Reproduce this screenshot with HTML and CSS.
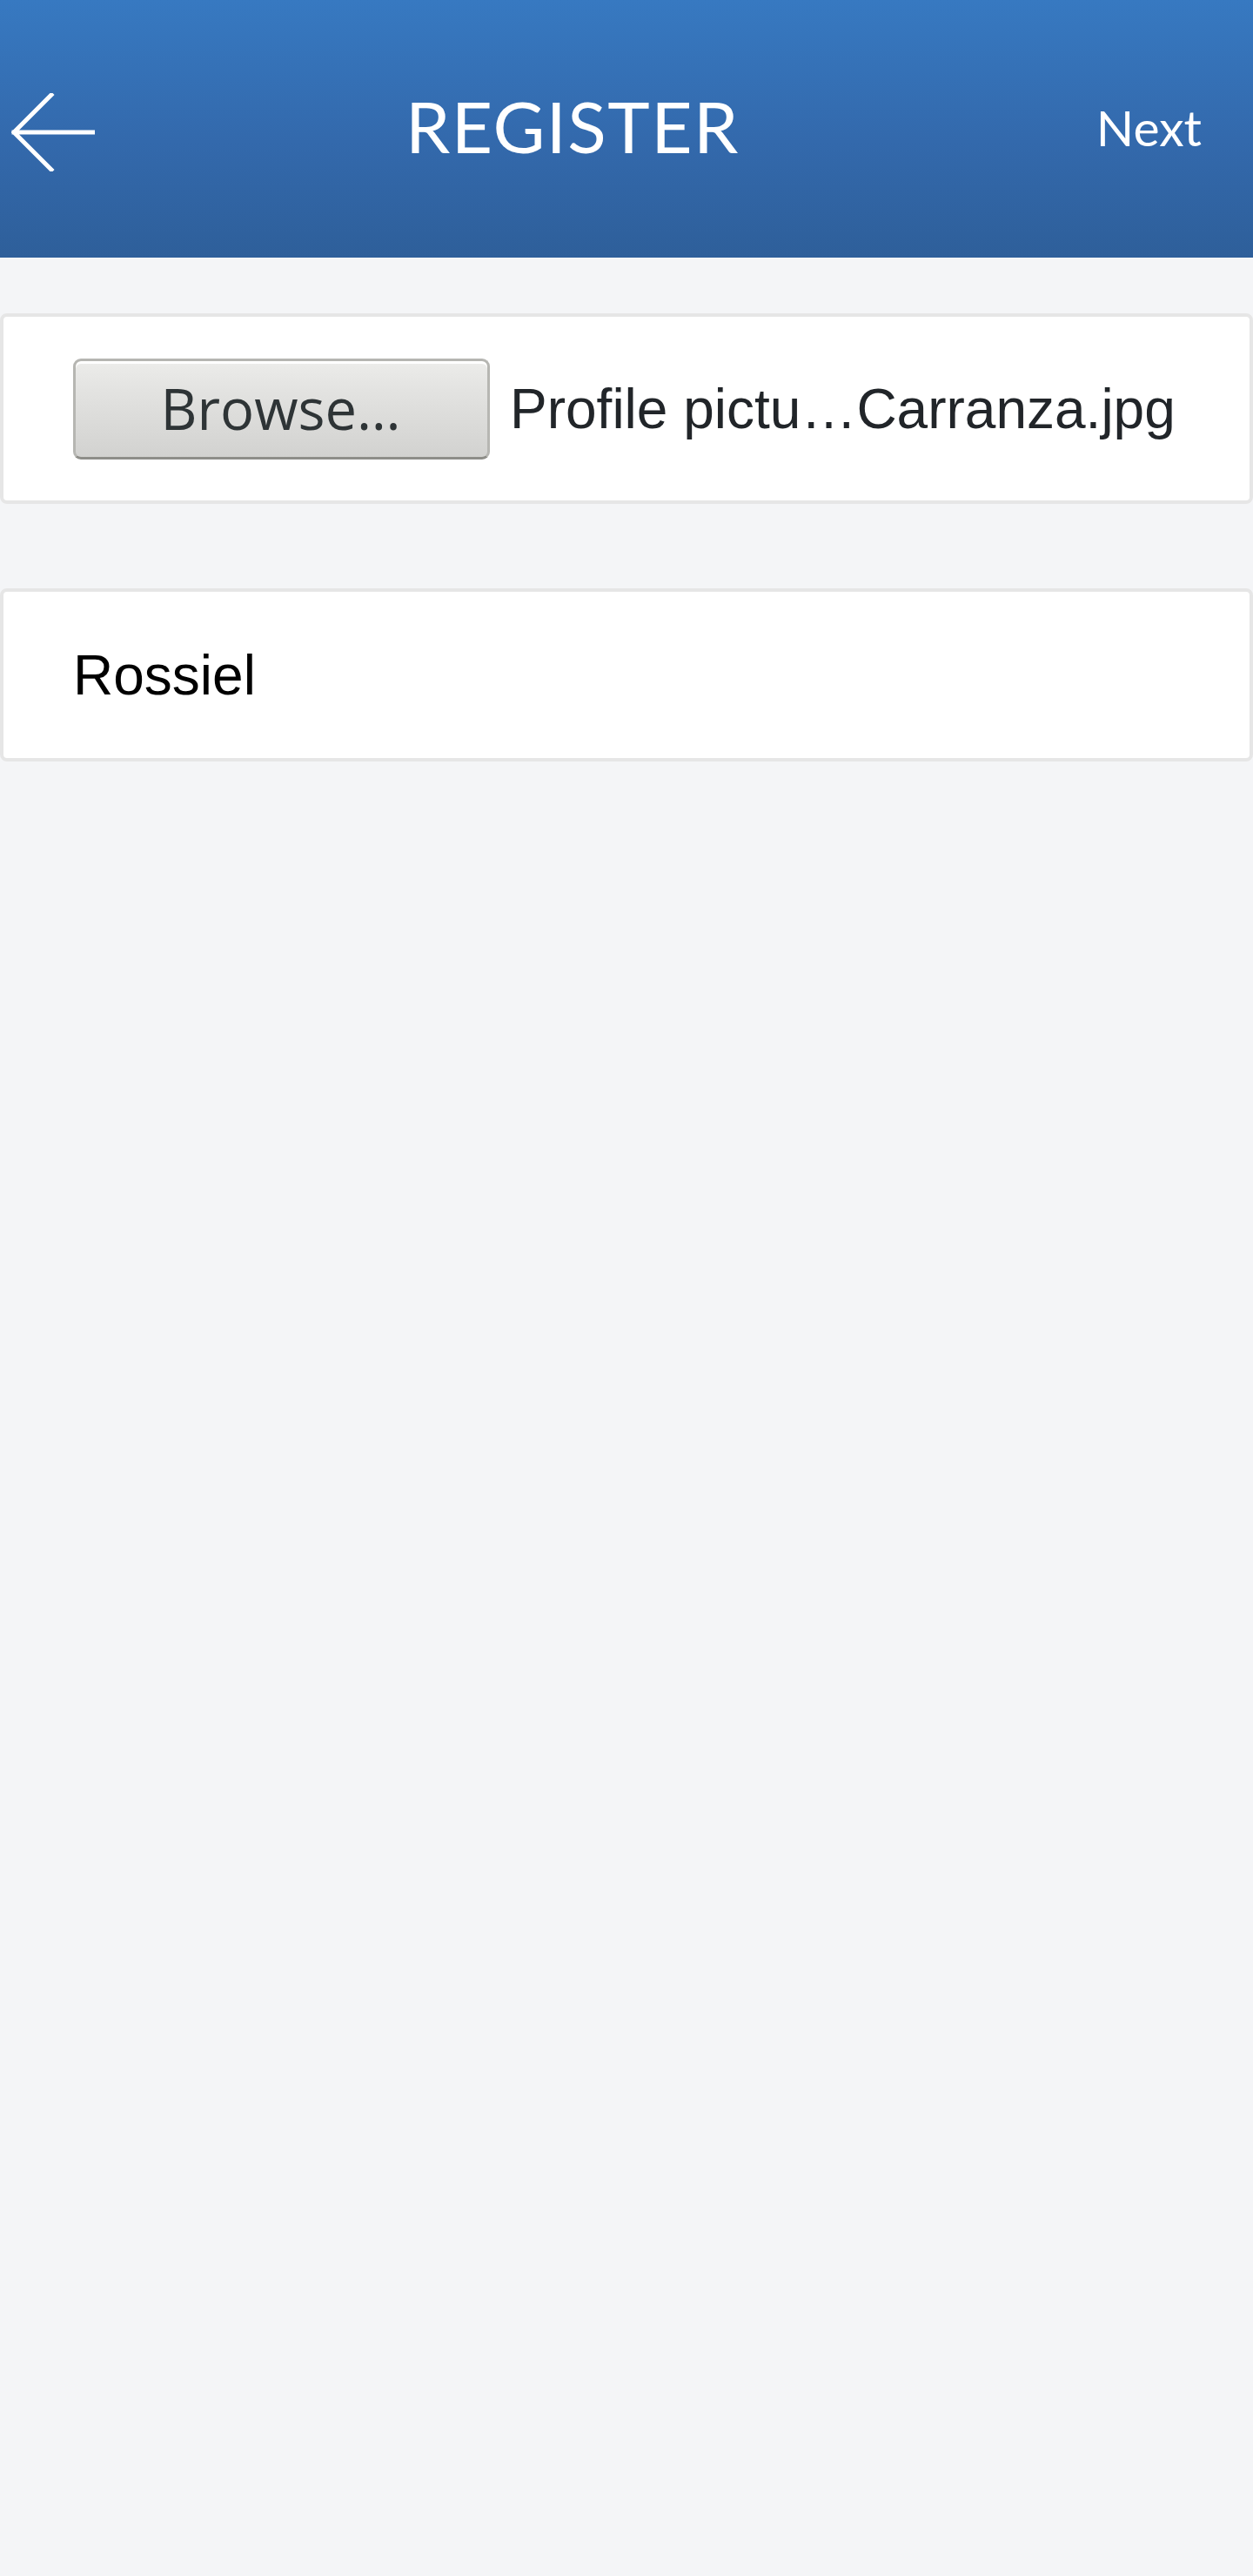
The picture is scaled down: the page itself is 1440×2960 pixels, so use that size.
FILE: index.html
```html
<!DOCTYPE html>
<html lang="en">
<head>
<meta charset="utf-8">
<title>Register</title>
<link rel="stylesheet" href="styles.css">
</head>
<body>
<header class="topbar">
  <div class="back" aria-label="Back">
    <svg width="96" height="90" viewBox="0 0 96 90" aria-hidden="true">
      <path d="M46 2 L3 45 L46 88 M3 45 L94 45" fill="none" stroke="#ffffff" stroke-width="5" stroke-linecap="square" stroke-linejoin="miter"/>
    </svg>
  </div>
  <h1 class="title">REGISTER</h1>
  <div class="next">Next</div>
</header>
<main class="content">
  <div class="card file-card">
    <span class="browse-btn"><span class="browse-label">Browse…</span></span>
    <span class="file-name">Profile pictu…Carranza.jpg</span>
  </div>
  <div class="card name-card">
    <span class="name-value">Rossiel</span>
  </div>
</main>
</body>
</html>
```

FILE: styles.css
```css
html, body {
  margin: 0;
  padding: 0;
}
body {
  background: #f4f5f7;
  width: 1440px;
  min-height: 2960px;
  font-family: "Liberation Sans", Arial, sans-serif;
}
.topbar {
  height: 296px;
  background: linear-gradient(to bottom, #3779c1 0%, #3369ac 55%, #2e5f9a 100%);
  display: flex;
  align-items: center;
  padding-right: 59px;
  padding-bottom: 8px;
  box-sizing: border-box;
}
.back {
  width: 466px;
  padding-left: 13px;
  box-sizing: border-box;
  display: flex;
  align-items: center;
  height: 90px;
  margin-top: 16px;
}
.back svg {
  display: block;
  filter: blur(0.6px);
}
.title {
  flex: 1;
  margin: 0;
  font-family: "Lato", "Open Sans", sans-serif;
  font-weight: 400;
  font-size: 82px;
  letter-spacing: 1.5px;
  color: #ffffff;
  line-height: 1;
}
.next {
  font-family: "Lato", "Open Sans", sans-serif;
  font-weight: 400;
  font-size: 57px;
  color: #ffffff;
  line-height: 1;
  margin-top: 4px;
}
.content {
  padding-top: 64px;
  display: flex;
  flex-direction: column;
  gap: 97px;
}
.card {
  background: #ffffff;
  border: 4px solid #e6e6e6;
  border-radius: 8px;
  box-sizing: border-box;
  display: flex;
  align-items: center;
}
.file-card {
  height: 219px;
  padding-left: 80px;
}
.browse-btn {
  width: 479px;
  height: 116px;
  box-sizing: border-box;
  border: 3px solid #b6b6b2;
  border-bottom-color: #8e8e89;
  border-radius: 9px;
  background: linear-gradient(to bottom, #ececea 0%, #e3e3e1 30%, #d2d2d0 100%);
  box-shadow: inset 0 3px 0 #ffffff;
  display: flex;
  align-items: center;
  justify-content: center;
}
.browse-label {
  font-family: "Open Sans", "DejaVu Sans", sans-serif;
  font-size: 65px;
  color: #2e3436;
  line-height: 1;
  margin-left: -2px;
}
.file-name {
  margin-left: 23px;
  font-size: 64px;
  color: #212529;
  line-height: 1;
  white-space: nowrap;
}
.name-card {
  height: 199px;
  padding-left: 80px;
}
.name-value {
  font-size: 64px;
  color: #000000;
  line-height: 1;
}
```
